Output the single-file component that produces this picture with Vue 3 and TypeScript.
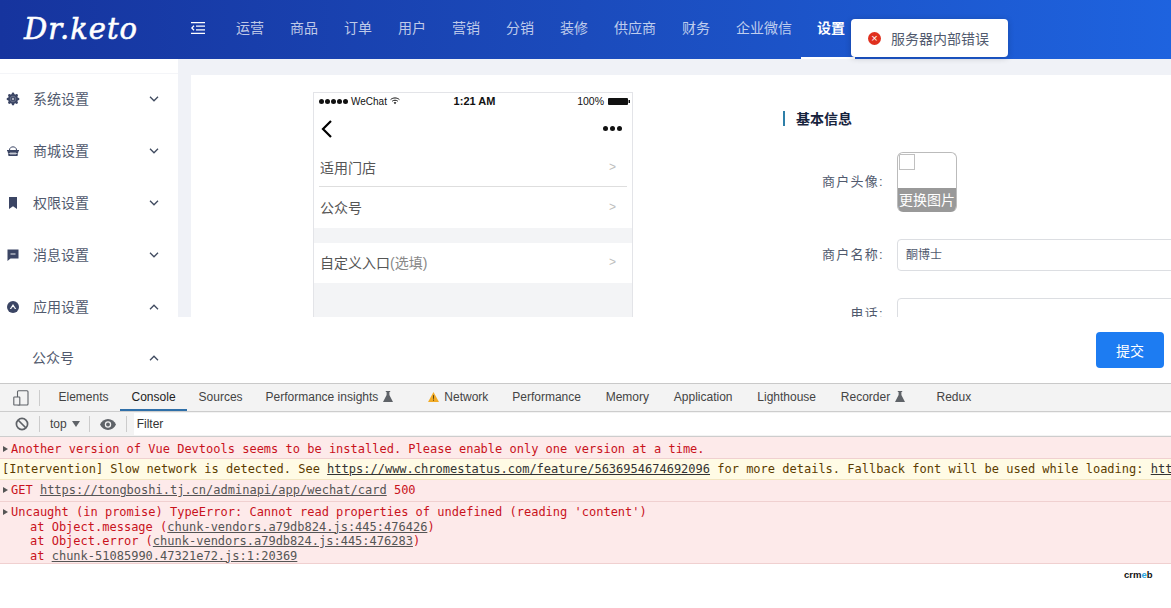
<script setup lang="ts">
const navItems: string[] = ['运营', '商品', '订单', '用户', '营销', '分销', '装修', '供应商', '财务', '企业微信']

const sideItems: { label: string; icon: string; open: boolean }[] = [
  { label: '系统设置', icon: 'gear', open: false },
  { label: '商城设置', icon: 'basket', open: false },
  { label: '权限设置', icon: 'bookmark', open: false },
  { label: '消息设置', icon: 'chat', open: false },
  { label: '应用设置', icon: 'app', open: true },
]

const tabs: { label: string; flask?: boolean; warn?: boolean; active?: boolean }[] = [
  { label: 'Elements' },
  { label: 'Console', active: true },
  { label: 'Sources' },
  { label: 'Performance insights', flask: true },
  { label: 'Network', warn: true },
  { label: 'Performance' },
  { label: 'Memory' },
  { label: 'Application' },
  { label: 'Lighthouse' },
  { label: 'Recorder', flask: true },
  { label: 'Redux' },
]
</script>

<template>
  <div class="page">
    <div class="app-shell">
      <header class="topbar">
        <div class="logo">Dr.keto</div>
        <svg class="toggler" width="14" height="12" viewBox="0 0 14 12" fill="none" stroke="#fff" stroke-width="1.3">
          <path d="M0 .7h14M5 4.2h9M5 7.8h9M0 11.3h14" />
          <path d="M3 3.8 .8 6 3 8.2" />
        </svg>
        <nav class="nav">
          <span v-for="item in navItems" :key="item" class="nav-item">{{ item }}</span>
          <span class="nav-item active">设置</span>
        </nav>
      </header>

      <div class="workspace">
        <aside class="sidebar">
          <div v-for="item in sideItems" :key="item.label" class="side-row">
            <svg class="side-icon" width="14" height="14" viewBox="0 0 14 14" fill="#3b4564">
              <g v-if="item.icon === 'gear'">
                <circle cx="7" cy="7" r="5" />
                <circle cx="7" cy="1.900" r="1.300" /><circle cx="7" cy="12.100" r="1.300" />
                <circle cx="1.900" cy="7" r="1.300" /><circle cx="12.100" cy="7" r="1.300" />
                <circle cx="3.400" cy="3.400" r="1.300" /><circle cx="10.600" cy="3.400" r="1.300" />
                <circle cx="3.400" cy="10.600" r="1.300" /><circle cx="10.600" cy="10.600" r="1.300" />
                <circle cx="7" cy="7" r="2.800" fill="none" stroke="#8a90a3" stroke-width=".6" />
                <circle cx="7" cy="7" r="1.200" fill="#aeb2c0" />
              </g>
              <g v-else-if="item.icon === 'basket'">
                <path d="M3.500 6C3.500 1.800 10.500 1.800 10.500 6" fill="none" stroke="#3b4564" stroke-width="1" />
                <path d="M1 6h12v1.200h-.6L11.500 12h-9L1.600 7.200H1z" />
                <path d="M5 8v3M7 8v3M9 8v3M2.500 9.500h9" stroke="#fff" stroke-width=".6" />
              </g>
              <path v-else-if="item.icon === 'bookmark'" d="M3 1h8v12L7 10.300 3 13z" />
              <g v-else-if="item.icon === 'chat'">
                <path d="M1.500 1.500h11v9H4.500l-3 2.500z" />
                <path d="M4.500 6h5" stroke="#fff" stroke-width=".9" />
              </g>
              <g v-else>
                <circle cx="7" cy="7" r="6" />
                <path d="M3.800 9 7 4l3.200 5z" fill="#fff" />
                <circle cx="7" cy="8.500" r="1.500" />
              </g>
            </svg>
            <span class="side-label">{{ item.label }}</span>
            <svg class="chev" :class="{ up: item.open }" width="10" height="6" viewBox="0 0 10 6" fill="none" stroke="#3f4a5f" stroke-width="1.300">
              <path d="M1 .8 5 4.800 9 .8" />
            </svg>
          </div>
          <div class="side-row sub">
            <span class="side-label">公众号</span>
            <svg class="chev up" width="10" height="6" viewBox="0 0 10 6" fill="none" stroke="#3f4a5f" stroke-width="1.300">
              <path d="M1 .8 5 4.800 9 .8" />
            </svg>
          </div>
        </aside>

        <div class="content-col">
          <main class="main">
            <section class="card">
              <div class="phone">
                <div class="status">
                  <span class="status-left">
                    <i v-for="n in 5" :key="n" class="dot"></i>
                    <span class="carrier">WeChat</span>
                    <svg width="10" height="8" viewBox="0 0 10 8" fill="none" stroke="#111" stroke-width="1">
                      <path d="M.6 2.600C3 .400 7 .400 9.400 2.600M2.200 4.200C3.800 2.900 6.200 2.900 7.800 4.200" />
                      <path d="M3.600 5.600 5 7.200l1.400-1.600C5.600 5 4.400 5 3.600 5.600z" fill="#111" stroke="none" />
                    </svg>
                  </span>
                  <span class="clock">1:21 AM</span>
                  <span class="status-right">
                    100%
                    <svg width="22" height="7" viewBox="0 0 22 7"><rect x="0" y="0" width="20" height="7" rx="1" fill="#111" /><rect x="20.500" y="2" width="1.500" height="3" fill="#111" /></svg>
                  </span>
                </div>
                <div class="phone-nav">
                  <svg width="11" height="18" viewBox="0 0 11 18" fill="none" stroke="#000" stroke-width="2.200"><path d="M10 1 2 9l8 8" /></svg>
                  <span class="more"><i></i><i></i><i></i></span>
                </div>
                <div class="phone-row first"><span>适用门店</span><em>&gt;</em></div>
                <div class="phone-row second"><span>公众号</span><em>&gt;</em></div>
                <div class="phone-gap"></div>
                <div class="phone-row third"><span>自定义入口<small>(选填)</small></span><em>&gt;</em></div>
                <div class="phone-rest"></div>
              </div>

              <div class="form">
                <h3 class="form-title">基本信息</h3>
                <div class="form-row avatar-row">
                  <label class="form-label">商户头像:</label>
                  <div class="avatar">
                    <span class="broken"></span>
                    <span class="change">更换图片</span>
                  </div>
                </div>
                <div class="form-row">
                  <label class="form-label">商户名称:</label>
                  <div class="input">酮博士</div>
                </div>
                <div class="form-row">
                  <label class="form-label">电话:</label>
                  <div class="input"></div>
                </div>
              </div>
            </section>
          </main>
          <div class="action-bar">
            <button class="submit" type="button">提交</button>
          </div>
        </div>
      </div>

      <div class="toast">
        <span class="toast-icon">×</span>
        <span>服务器内部错误</span>
      </div>
    </div>

    <div class="devtools">
      <div class="tabs">
        <svg class="dock" width="16" height="16" viewBox="0 0 16 16" fill="none" stroke="#5f6368" stroke-width="1.100">
          <rect x="4.500" y=".8" width="10.500" height="14.200" rx="1" />
          <rect x=".8" y="7" width="6" height="8" fill="#f3f3f3" rx=".6" />
        </svg>
        <span class="sep tab-sep"></span>
        <span v-for="tab in tabs" :key="tab.label" class="tab" :class="{ active: tab.active, warned: tab.warn, redux: tab.label === 'Redux' }">
          <svg v-if="tab.warn" width="11" height="10" viewBox="0 0 12 11"><path d="M6 0 12 11H0z" fill="#f2ab26" /><path d="M6 3.500v4M6 8.300v1.300" stroke="#4b3a10" stroke-width="1" /></svg>
          {{ tab.label }}
          <svg v-if="tab.flask" width="10" height="11" viewBox="0 0 10 11" fill="#5f6368"><path d="M2.800 0h4.400v1H6.400v3L10 11H0l3.600-7V1h-.8z" /></svg>
        </span>
      </div>
      <div class="toolbar">
        <svg width="14" height="14" viewBox="0 0 14 14" fill="none" stroke="#5f6368" stroke-width="1.700">
          <circle cx="7" cy="7" r="5.600" /><path d="M3 3l8 8" />
        </svg>
        <span class="sep first-sep"></span>
        <span class="ctx">top</span>
        <span class="ctx-arrow"></span>
        <span class="sep"></span>
        <svg class="eye" width="16" height="11" viewBox="0 0 16 11">
          <path d="M8 0C4.500 0 1.500 2.200 0 5.500 1.500 8.800 4.500 11 8 11s6.500-2.200 8-5.500C14.500 2.200 11.500 0 8 0z" fill="#5f6368" />
          <circle cx="8" cy="5.500" r="3.200" fill="#f3f3f3" /><circle cx="8" cy="5.500" r="1.900" fill="#5f6368" />
        </svg>
        <span class="sep"></span>
        <div class="filter">Filter</div>
      </div>

      <div class="console">
        <div class="log err r1"><i class="tri"></i>Another version of Vue Devtools seems to be installed. Please enable only one version at a time.</div>
        <div class="log warn r2">[Intervention] Slow network is detected. See <u>https://www.chromestatus.com/feature/5636954674692096</u> for more details. Fallback font will be used while loading: <u>https://at.alicdn.com/t/font</u></div>
        <div class="log err r3"><i class="tri"></i>GET <u>https://tongboshi.tj.cn/adminapi/app/wechat/card</u> 500</div>
        <div class="log err r4">
          <div><i class="tri"></i>Uncaught (in promise) TypeError: Cannot read properties of undefined (reading 'content')</div>
          <div class="trace">at Object.message (<u>chunk-vendors.a79db824.js:445:476426</u>)</div>
          <div class="trace">at Object.error (<u>chunk-vendors.a79db824.js:445:476283</u>)</div>
          <div class="trace">at <u>chunk-51085990.47321e72.js:1:20369</u></div>
        </div>
        <div class="brand"><span>crm</span><b>e</b><span>b</span></div>
      </div>
    </div>
  </div>
</template>

<style>
html,
body {
  margin: 0;
  background: #fff;
  overflow: hidden;
}
</style>

<style scoped>
.page {
  width: 1171px;
  height: 608px;
  display: flex;
  flex-direction: column;
  overflow: hidden;
  font-family: "Liberation Sans", "Noto Sans CJK SC", sans-serif;
  background: #fff;
}
.app-shell {
  height: 383px;
  flex: none;
  display: flex;
  flex-direction: column;
  position: relative;
  overflow: hidden;
}
.topbar {
  height: 59px;
  flex: none;
  display: flex;
  align-items: center;
  background: linear-gradient(90deg, #16349e 0%, #1b4bbc 50%, #1e63df 100%);
  color: #fff;
}
.logo {
  width: 191px;
  box-sizing: border-box;
  padding-left: 24px;
  font-family: "DejaVu Serif", serif;
  font-style: italic;
  font-size: 29px;
  letter-spacing: 1px;
  line-height: 59px;
  -webkit-text-stroke: 0.6px #fff;
}
.toggler {
  flex: none;
  margin-top: -3px;
}
.nav {
  display: flex;
  height: 59px;
  margin-left: 18px;
}
.nav-item {
  position: relative;
  padding: 0 13px;
  font-size: 14px;
  line-height: 56px;
  color: rgba(255, 255, 255, 0.72);
  white-space: nowrap;
}
.nav-item.active {
  color: #fff;
  font-weight: 700;
  margin-left: -1px;
}
.nav-item.active::after {
  content: "";
  position: absolute;
  left: -3px;
  right: 3px;
  bottom: 0;
  height: 2px;
  background: #fff;
}
.workspace {
  flex: 1;
  display: flex;
  min-height: 0;
}
.sidebar {
  width: 178px;
  flex: none;
  box-sizing: border-box;
  padding-top: 14px;
  background: #fff;
  overflow: hidden;
}
.side-row {
  height: 52px;
  display: flex;
  align-items: center;
  padding-left: 6px;
  color: #515a6e;
  font-size: 14px;
}
.side-row:first-child {
  border-top: 1px solid #f4f5f8;
  height: 50px;
  padding-bottom: 1px;
}
.side-row.sub {
  padding-left: 32px;
  height: 50px;
}
.side-icon {
  flex: none;
  margin-right: 13px;
  margin-bottom: 1px;
}
.side-label {
  flex: 1;
  padding-bottom: 2px;
}
.chev {
  flex: none;
  margin-right: 19px;
}
.chev.up {
  transform: rotate(180deg);
}
.content-col {
  flex: 1;
  display: flex;
  flex-direction: column;
  min-width: 0;
}
.main {
  height: 258px;
  flex: none;
  box-sizing: border-box;
  padding: 16px 0 0 13px;
  background: #f0f2f7;
  overflow: hidden;
}
.card {
  display: flex;
  align-items: flex-start;
  height: 300px;
  box-sizing: border-box;
  padding: 17px 0 0 122px;
  background: #fff;
  overflow: hidden;
}
.phone {
  width: 320px;
  flex: none;
  box-sizing: border-box;
  height: 300px;
  border: 1px solid #e3e4e8;
  border-bottom: 0;
  display: flex;
  flex-direction: column;
  color: #111;
}
.status {
  height: 16px;
  flex: none;
  display: grid;
  grid-template-columns: 1fr auto 1fr;
  align-items: center;
  padding: 0 2px 0 5px;
  font-size: 10px;
}
.status-left {
  display: flex;
  align-items: center;
  gap: 1px;
}
.dot {
  width: 5px;
  height: 5px;
  border-radius: 50%;
  background: #111;
}
.carrier {
  margin: 0 2px 0 2px;
}
.clock {
  font-size: 11px;
  font-weight: 700;
}
.status-right {
  display: flex;
  align-items: center;
  justify-content: flex-end;
  gap: 4px;
  font-size: 10.500px;
}
.phone-nav {
  height: 39px;
  flex: none;
  display: flex;
  align-items: center;
  justify-content: space-between;
  padding: 0 10px 0 7px;
}
.more {
  display: flex;
  gap: 2px;
}
.more i {
  width: 5px;
  height: 5px;
  border-radius: 50%;
  background: #111;
}
.phone-row {
  display: flex;
  align-items: center;
  justify-content: space-between;
  padding: 0 16px 2px 6px;
  box-sizing: border-box;
  font-size: 14px;
  color: #555;
  background: #fff;
  flex: none;
}
.phone-row em {
  font-style: normal;
  color: #bdbdbd;
  font-size: 12px;
}
.phone-row small {
  font-size: 14px;
  color: #888;
}
.phone-row.first {
  height: 39px;
  position: relative;
}
.phone-row.first::after {
  content: "";
  position: absolute;
  left: 5px;
  right: 5px;
  bottom: 0;
  height: 1px;
  background: #dedede;
}
.phone-row.second {
  height: 41px;
}
.phone-row.third {
  height: 40px;
}
.phone-gap {
  height: 15px;
  flex: none;
  background: #f3f4f6;
}
.phone-rest {
  flex: 1;
  background: #f3f4f6;
}
.form {
  flex: 1;
  min-width: 0;
  margin-left: 150px;
  padding-top: 19px;
  color: #515a6e;
  overflow: hidden;
}
.form-title {
  margin: 0;
  height: 15px;
  line-height: 17px;
  border-left: 2px solid #2e7fa8;
  padding-left: 11px;
  font-size: 14px;
  font-weight: 700;
  color: #17233d;
}
.form-row {
  display: flex;
  align-items: center;
  margin-top: 27px;
}
.avatar-row {
  margin-top: 26px;
}
.form-label {
  width: 101px;
  flex: none;
  box-sizing: border-box;
  text-align: right;
  font-size: 13px;
  letter-spacing: 1.300px;
  margin-right: 13px;
  padding-bottom: 4px;
  white-space: nowrap;
}
.avatar {
  width: 60px;
  height: 60px;
  flex: none;
  box-sizing: border-box;
  border: 1px solid #bbb;
  border-bottom: 0;
  border-radius: 6px;
  position: relative;
  overflow: hidden;
  background: #fff;
}
.broken {
  display: block;
  width: 16px;
  height: 16px;
  box-sizing: border-box;
  margin: 1px 0 0 1px;
  border: 1px solid #c0c0c0;
}
.change {
  position: absolute;
  left: -1px;
  right: -1px;
  bottom: 0;
  height: 24px;
  line-height: 24px;
  text-align: center;
  font-size: 14px;
  color: #fff;
  background: #999;
}
.input {
  width: 400px;
  height: 32px;
  flex: none;
  box-sizing: border-box;
  border: 1px solid #dcdee2;
  border-radius: 4px;
  padding-left: 8px;
  line-height: 31px;
  font-size: 12px;
  color: #515a6e;
}
.action-bar {
  flex: 1;
  box-sizing: border-box;
  padding: 15px 7px 0 0;
  display: flex;
  justify-content: flex-end;
  align-items: flex-start;
  background: #fff;
}
.submit {
  width: 68px;
  height: 36px;
  border: 0;
  border-radius: 4px;
  background: #1d7cf2;
  color: #fff;
  font: 14px "Liberation Sans", "Noto Sans CJK SC", sans-serif;
  padding: 0;
}
.toast {
  position: absolute;
  left: 851px;
  top: 19px;
  width: 157px;
  height: 38px;
  box-sizing: border-box;
  padding-left: 17px;
  display: flex;
  align-items: center;
  gap: 10px;
  background: #fff;
  border-radius: 4px;
  box-shadow: 0 1px 6px rgba(0, 0, 0, 0.2);
  font-size: 14px;
  color: #515a6e;
}
.toast-icon {
  width: 13px;
  height: 13px;
  border-radius: 50%;
  background: #e0301e;
  color: #fff;
  font-size: 11px;
  line-height: 12px;
  text-align: center;
}
.devtools {
  flex: 1;
  min-height: 0;
  display: flex;
  flex-direction: column;
  border-top: 1px solid #c9c9c9;
  font-size: 12px;
  color: #333;
}
.tabs {
  height: 27px;
  flex: none;
  position: relative;
  display: flex;
  align-items: center;
  background: #f3f3f3;
  border-bottom: 1px solid #cdcdcd;
  padding-left: 13px;
}
.dock {
  flex: none;
}
.tab-sep {
  margin: 0 7px 0 10px;
}
.sep {
  width: 1px;
  height: 16px;
  flex: none;
  background: #ccc;
}
.tab {
  height: 27px;
  display: flex;
  align-items: center;
  gap: 5px;
  padding: 0 11.500px 2px;
  color: #444;
  white-space: nowrap;
  box-sizing: border-box;
}
.tab.active {
  color: #222;
  border-bottom: 2px solid #2f6fa8;
  padding-bottom: 0;
}
.tab.warned {
  margin-left: 12px;
}
.tab.warned ~ .tab {
  padding-left: 12.400px;
  padding-right: 12.400px;
}
.tab.redux {
  margin-left: 6.500px;
}
.toolbar {
  height: 24px;
  flex: none;
  display: flex;
  align-items: center;
  background: #f3f3f3;
  border-bottom: 1px solid #cdcdcd;
  padding-left: 15px;
  color: #444;
}
.first-sep {
  margin: 0 10px;
}
.ctx-arrow {
  width: 0;
  height: 0;
  margin: 0 9px 0 5px;
  border-left: 4px solid transparent;
  border-right: 4px solid transparent;
  border-top: 6px solid #5f6368;
}
.eye {
  margin: 0 10px;
}
.filter {
  flex: 1;
  height: 22px;
  line-height: 22px;
  margin-left: 7px;
  padding-left: 3px;
  background: #fff;
  color: #333;
}
.console {
  flex: 1;
  min-height: 0;
  position: relative;
  font-family: "DejaVu Sans Mono", monospace;
  font-size: 12px;
  line-height: 14.500px;
  background: #fff;
}
.log {
  box-sizing: border-box;
  padding-left: 11px;
  white-space: nowrap;
  overflow: hidden;
  border-bottom: 1px solid #f0d0d0;
  position: relative;
}
.log.err {
  background: #fdeaea;
  color: #c9121c;
}
.log.err u {
  color: #555;
}
.log.warn {
  background: #fffbe5;
  color: #5c3b00;
  padding-left: 2px;
  border-bottom-color: #f3e6c0;
}
.log.warn u {
  color: #333;
}
.r1 {
  height: 22px;
  padding-top: 5px;
}
.r2 {
  height: 21px;
  padding-top: 3px;
}
.r3 {
  height: 22px;
  padding-top: 3px;
}
.r4 {
  height: 62px;
  padding-top: 3px;
}
.trace {
  padding-left: 19px;
}
.tri {
  position: absolute;
  left: 3px;
  width: 0;
  height: 0;
  margin-top: 4px;
  border-top: 3px solid transparent;
  border-bottom: 3px solid transparent;
  border-left: 5px solid #555;
}
.brand {
  position: absolute;
  left: 1124px;
  top: 132px;
  font-family: "Liberation Sans", sans-serif;
  font-weight: 700;
  font-size: 9.500px;
  line-height: 12px;
  color: #111;
}
.brand b {
  color: #2aa4e0;
}
</style>
